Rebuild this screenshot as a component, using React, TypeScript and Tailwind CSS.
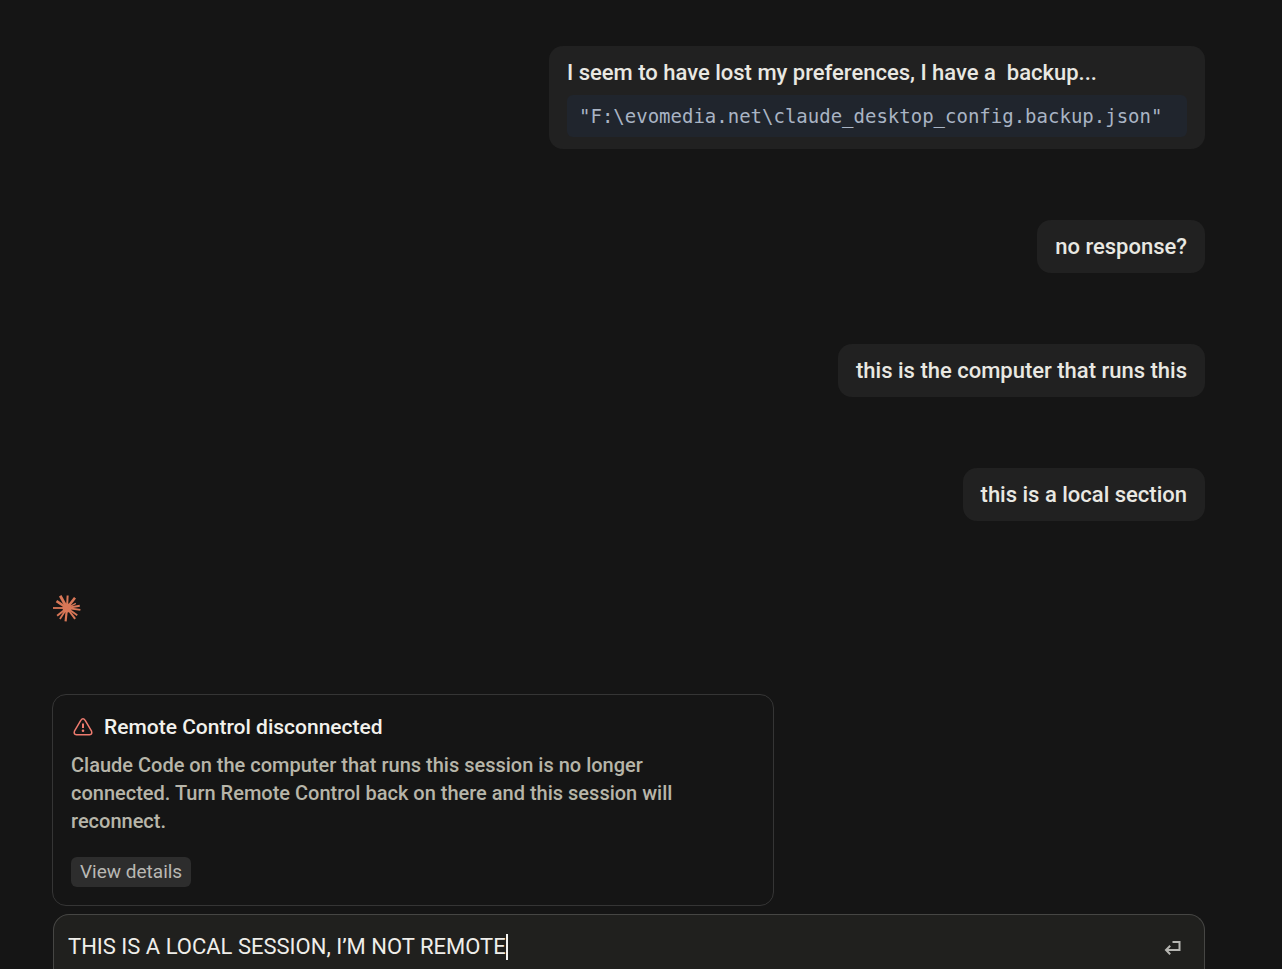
import { ReactNode } from "react";

function Bubble({ children }: { children: ReactNode }) {
  return (
    <div className="max-w-full rounded-[14px] bg-[#212121] px-[18px] py-3 text-[22px] leading-[29px] font-medium text-[#e9e8e2]">
      {children}
    </div>
  );
}

const rays = [
  [3, 12.5, 2], [38, 13, 2.6], [62, 10, 1.4], [80, 13, 1.8], [98, 13.5, 1.8], [125, 12.5, 1.8], [143, 13.5, 2],
  [186, 13.5, 2.2], [213, 13, 1.8], [232, 12.5, 2], [270, 14, 1.8], [303, 12.5, 2.6], [331, 14, 2.8],
];

function Spark() {
  return (
    <svg viewBox="-14 -14 28 28" className="size-7" stroke="#d97757" aria-hidden="true">
      <circle r="4.5" fill="#d97757" stroke="none" />
      {rays.map(([angle, length, width]) => (
        <line key={angle} x1="0" y1="0" x2="0" y2={-length} strokeWidth={width} transform={`rotate(${angle})`} />
      ))}
    </svg>
  );
}

function WarningIcon() {
  return (
    <svg viewBox="0 0 20 18" className="h-[18px] w-5" fill="none" stroke="#ee7b6f" strokeWidth="1.5" strokeLinejoin="round" aria-hidden="true">
      <path d="M7.8 2.4 Q10 -.7 12.2 2.4 L18.4 12.8 Q19.8 16.4 16.5 16.7 H3.5 Q.2 16.4 1.6 12.8 Z" />
      <path d="M10 5.5 V10" strokeWidth="2" />
      <circle cx="10" cy="12.7" r="1.3" fill="#ee7b6f" stroke="none" />
    </svg>
  );
}

function ReturnIcon() {
  return (
    <svg viewBox="0 0 18 16" className="h-4 w-[18px]" fill="none" stroke="currentColor" strokeWidth="2" aria-hidden="true">
      <path d="M8.5 2 H15.5 V10 H2" />
      <path d="M6.2 5.8 L2 10 L6.2 14.2" />
    </svg>
  );
}

export default function App() {
  return (
    <main className="flex min-h-screen flex-col bg-[#151515] pt-[46px] pr-[77px] pl-[53px] font-['Roboto',sans-serif]">
      <section aria-label="Conversation" className="flex flex-col items-end gap-[71px]">
        <Bubble>
          <p className="whitespace-pre-wrap">I seem to have lost my preferences, I have a  backup...</p>
          <pre className="mt-2 min-w-[620px] rounded-md bg-[#20252d] px-3 py-[6px] font-['DejaVu_Sans_Mono',monospace] text-[19px] leading-[30px] font-normal text-[#a9b4c4]">
            {'"F:\\evomedia.net\\claude_desktop_config.backup.json"'}
          </pre>
        </Bubble>
        <Bubble>no response?</Bubble>
        <Bubble>this is the computer that runs this</Bubble>
        <Bubble>this is a local section</Bubble>
      </section>

      <div className="mt-[73px]">
        <Spark />
      </div>

      <section className="mt-[72px] -ml-px w-[722px] max-w-full rounded-[14px] border border-[#353535] px-[18px] pt-[18px] pb-[18px]">
        <div className="flex items-center gap-[11px] pl-[2px]">
          <WarningIcon />
          <h2 className="text-[21px] leading-7 font-medium text-[#f2f1ec]">Remote Control disconnected</h2>
        </div>
        <p className="mt-[10px] max-w-[640px] text-[20px] leading-7 font-medium text-[#b7b5a9]">
          Claude Code on the computer that runs this session is no longer connected. Turn Remote Control back on there and this session will reconnect.
        </p>
        <button type="button" className="mt-[22px] rounded-md bg-[#2d2d2d] px-[9px] text-[19px] leading-[30px] text-[#b9b8b4]">
          View details
        </button>
      </section>

      <form className="mt-2 flex flex-1 items-start rounded-t-[16px] border border-b-0 border-[#464644] bg-[#20201e] pt-[19px] pr-[22px] pl-[14px]">
        <div className="flex min-w-0 flex-1 items-center">
          <input
            aria-label="Message"
            defaultValue="THIS IS A LOCAL SESSION, I’M NOT REMOTE"
            className="h-[26px] max-w-full field-sizing-content bg-transparent text-[22px] leading-[26px] text-[#efeeea] caret-transparent outline-none"
          />
          <span className="h-[26px] w-[2px] shrink-0 bg-[#f4f4f2]" />
        </div>
        <button type="submit" aria-label="Send" className="mt-[6px] text-[#b5b5b1]">
          <ReturnIcon />
        </button>
      </form>
    </main>
  );
}
